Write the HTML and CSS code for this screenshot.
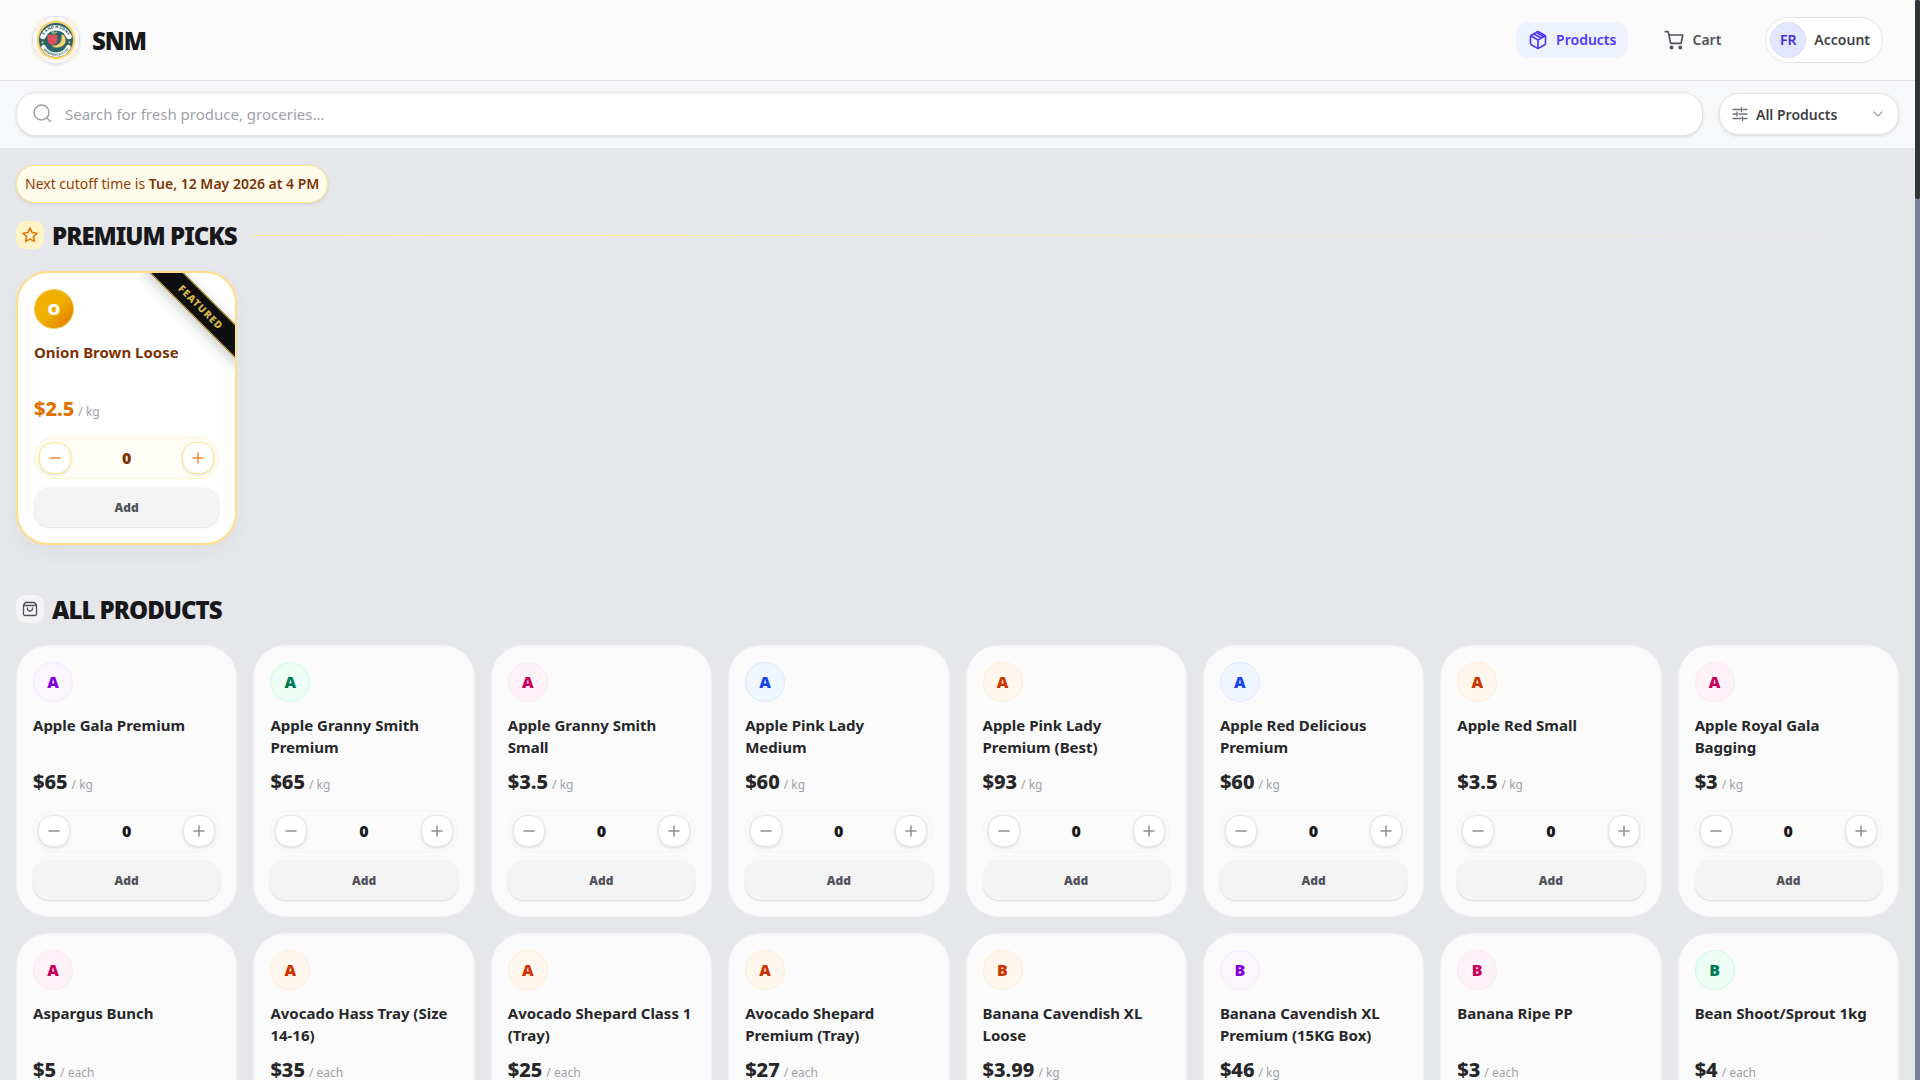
FILE: index.html
```html
<!DOCTYPE html>
<html lang="en">
  <head>
    <meta charset="UTF-8">
    <meta name="viewport" content="width=device-width, initial-scale=1">
    <title>SNM - Products</title>
    <link rel="stylesheet" href="styles.css">
  </head>
  <body>
    <div class="page">
      <header class="header">
        <a class="brand" href="#">
          <span class="logo">
            <svg viewBox="0 0 80 80" width="40" height="40">
              <rect width="80" height="80" rx="10" fill="#fdf1e0"/>
              <circle cx="40" cy="40" r="38" fill="#f2cd62"/>
              <circle cx="40" cy="40" r="34" fill="#2c6468"/>
              <path d="M14 33a28 28 0 0 1 52 0" fill="none" stroke="#fff" stroke-width="11" stroke-linecap="round"/>
              <path d="M15 54a28 28 0 0 0 50 0" fill="none" stroke="#fff" stroke-width="9" stroke-linecap="round"/>
              <path id="logo-top" d="M14 36a27 27 0 0 1 52 0" fill="none"/>
              <path id="logo-bottom" d="M12 54a31 31 0 0 0 56 0" fill="none"/>
              <path d="M23 33c2-5 8-5 10-3 4-3 10-1 10 5 1 9-4 15-10 15s-11-7-10-17z" fill="#dc4f5c"/>
              <path d="M32 27l3-5M34 27l8-3" stroke="#8fb98a" stroke-width="3"/>
              <path d="M54 29c11 11 4 25-10 26-6 1-12-2-13-4 14 1 22-6 20-21z" fill="#f6d36c"/>
              <text class="logo-text"><textPath href="#logo-top" startOffset="50%" text-anchor="middle">S AND N SONS</textPath></text>
              <text class="logo-text small"><textPath href="#logo-bottom" startOffset="50%" text-anchor="middle">NOMINEES PTY LTD</textPath></text>
              <circle cx="13" cy="45" r="2" fill="#f2cd62"/>
              <circle cx="67" cy="45" r="2" fill="#f2cd62"/>
            </svg>
          </span>
          <span class="brand-name">SNM</span>
        </a>
        <nav class="nav">
          <a class="nav-link active" href="#">
            <svg class="icon" viewBox="0 0 24 24" width="20" height="20" stroke-width="2">
              <path d="M21 8a2 2 0 0 0-1-1.730l-7-4a2 2 0 0 0-2 0l-7 4A2 2 0 0 0 3 8v8a2 2 0 0 0 1 1.730l7 4a2 2 0 0 0 2 0l7-4A2 2 0 0 0 21 16z"/>
              <path d="M3.300 7l8.700 5 8.700-5M12 22V12M7 4.700l9 5M10 2.800l9 5.200"/>
            </svg>
            Products
          </a>
          <a class="nav-link" href="#">
            <svg class="icon" viewBox="0 0 24 24" width="20" height="20" stroke-width="2">
              <path d="M1.500 2H5l3 14h12.500L22.500 6H6"/>
              <circle cx="9" cy="21" r="1.300" fill="currentColor"/>
              <circle cx="19.500" cy="21" r="1.300" fill="currentColor"/>
            </svg>
            Cart
          </a>
          <a class="account" href="#">
            <span class="account-initials">FR</span>
            Account
          </a>
        </nav>
      </header>

      <div class="toolbar">
        <div class="search">
          <svg class="icon" viewBox="0 0 20 20" width="20" height="20" stroke-width="1.500">
            <circle cx="8.500" cy="8.500" r="7.500"/>
            <path d="M14 14l3.500 3.500"/>
          </svg>
          <input type="text" aria-label="Search products" placeholder="Search for fresh produce, groceries...">
        </div>
        <div class="filter">
          <svg class="icon filter-icon" viewBox="0 0 16 16" width="16" height="16" stroke-width="1.300">
            <path d="M1 3.500h8M11 3.500h4M9.500 1.500v4M1 8h4M7 8h8M5 6v4M1 12.500h8M11 12.500h4M10.500 10.500v4"/>
          </svg>
          <select aria-label="Product filter">
            <option>All Products</option>
          </select>
          <svg class="icon chevron" viewBox="0 0 16 16" width="16" height="16" stroke-width="1.300">
            <path d="M4 6l4 4 4-4"/>
          </svg>
        </div>
      </div>

      <main class="content">
        <p class="cutoff">Next cutoff time is <strong>Tue, 12 May 2026 at 4 PM</strong></p>

        <section class="section premium">
          <div class="section-head">
            <span class="section-icon">
              <svg class="icon" viewBox="0 0 24 24" width="18" height="18" stroke-width="2">
                <path d="M12 2.800l2.800 6 6.600.8-4.900 4.500 1.300 6.500L12 17.400l-5.800 3.200 1.300-6.500-4.900-4.500 6.600-.8z"/>
              </svg>
            </span>
            <h2>PREMIUM PICKS</h2>
            <span class="section-line"></span>
          </div>
          <div class="grid" id="premium-grid"></div>
        </section>

        <section class="section">
          <div class="section-head">
            <span class="section-icon">
              <svg class="icon" viewBox="0 0 16 16" width="16" height="16" stroke-width="1.300">
                <path d="M3.500 1.500h9l2 2.500v9a1.500 1.500 0 0 1-1.500 1.500H3A1.500 1.500 0 0 1 1.500 13V4zM1.500 4.500h13M5.500 7v.5a2.500 2.500 0 0 0 5 0V7"/>
              </svg>
            </span>
            <h2>ALL PRODUCTS</h2>
            <span class="section-line"></span>
          </div>
          <div class="grid" id="product-grid"></div>
        </section>
      </main>
    </div>
    <div class="rail"><div class="rail-thumb"></div></div>
    <script src="script.js"></script>
  </body>
</html>
```
FILE: styles.css
```css
* {
  box-sizing: border-box;
}
body {
  margin: 0;
  display: flex;
  height: 100vh;
  overflow: hidden;
  background: #e5e7eb;
  color: #18181b;
  font-family: "Noto Sans", "Open Sans", sans-serif;
  font-size: 14px;
  line-height: 20px;
}
a {
  color: inherit;
  text-decoration: none;
}
button, input, select {
  font-family: inherit;
  margin: 0;
}
.icon {
  flex: none;
  fill: none;
  stroke: currentColor;
  stroke-linecap: round;
  stroke-linejoin: round;
}
.page {
  flex: 1;
  min-width: 0;
  overflow: hidden;
}

/* slim scroll rail on the right edge */
.rail {
  width: 5px;
  background: #76809a;
}
.rail-thumb {
  height: 199px;
  border-radius: 3px;
  background: #2b3636;
}

/* header */
.header {
  display: flex;
  align-items: center;
  justify-content: space-between;
  padding: 16px 32px;
  border-bottom: 1px solid #e4e4e7;
  background: #fafafa;
}
.brand {
  display: flex;
  align-items: center;
  gap: 12px;
}
.logo {
  display: flex;
  align-items: center;
  justify-content: center;
  width: 48px;
  height: 48px;
  border: 1px solid #e4e4e7;
  border-radius: 50%;
  background: #fff;
  box-shadow: 0 1px 3px rgba(0, 0, 0, 0.1);
}
.logo-text {
  fill: #2c6468;
  font-size: 8px;
  font-weight: 800;
}
.logo-text.small {
  font-size: 6px;
}
.brand-name {
  padding-top: 2px;
  font-size: 24px;
  line-height: 30px;
  font-weight: 900;
  letter-spacing: -1px;
}
.nav {
  display: flex;
  align-items: center;
  gap: 24px;
  font-weight: 600;
  color: #52525b;
}
.nav-link {
  display: flex;
  align-items: center;
  gap: 8px;
  padding: 8px 12px;
  border-radius: 12px;
}
.nav-link.active {
  background: #eef2ff;
  color: #4f39f6;
}
.account {
  display: flex;
  align-items: center;
  gap: 8px;
  margin-left: 8px;
  padding: 4px 12px 4px 4px;
  border: 1px solid #e4e4e7;
  border-radius: 24px;
  background: #fff;
  color: #3f3f46;
}
.account-initials {
  width: 36px;
  height: 36px;
  border: 1px solid #dcdfee;
  border-radius: 50%;
  background: #e0e7ff;
  color: #432dd7;
  line-height: 34px;
  text-align: center;
}

/* search row */
.toolbar {
  display: flex;
  align-items: center;
  gap: 16px;
  padding: 11px 16px 12px;
  background: #f7f8fa;
}
.search {
  display: flex;
  flex: 1;
  align-items: center;
  gap: 12px;
  height: 44px;
  padding: 0 16px;
  border: 1px solid #e4e4e7;
  border-radius: 20px;
  background: #fff;
  color: #9f9fa9;
  box-shadow: 0 1px 3px rgba(0, 0, 0, 0.12);
}
.search input {
  flex: 1;
  padding: 0;
  border: 0;
  outline: 0;
  background: none;
  font-size: 15px;
}
.search input::placeholder {
  color: #9f9fa9;
}
.filter {
  position: relative;
  width: 180px;
  color: #71717b;
}
.filter select {
  width: 100%;
  height: 42px;
  padding: 0 36px;
  border: 1px solid #e4e4e7;
  border-radius: 20px;
  appearance: none;
  background: #fff;
  color: #3f3f46;
  font-size: 14px;
  font-weight: 600;
  box-shadow: 0 1px 3px rgba(0, 0, 0, 0.12);
}
.filter-icon {
  position: absolute;
  top: 13px;
  left: 13px;
}
.chevron {
  position: absolute;
  top: 13px;
  right: 13px;
  color: #9f9fa9;
}

/* sections */
.content {
  padding: 17px 16px;
}
.cutoff {
  width: fit-content;
  margin: 0 0 16px;
  padding: 8px;
  border: 1px solid #fee685;
  border-radius: 19px;
  background: #fffbeb;
  color: #973c00;
  box-shadow: 0 1px 3px rgba(0, 0, 0, 0.12);
}
.cutoff strong {
  color: #7b3306;
  font-weight: 600;
}
.section {
  margin-bottom: 48px;
}
.section-head {
  display: flex;
  align-items: center;
  gap: 8px;
  margin-bottom: 20px;
}
.section-icon {
  display: flex;
  align-items: center;
  justify-content: center;
  width: 28px;
  height: 28px;
  border-radius: 9px;
  background: #f4f4f5;
  color: #52525b;
}
.premium .section-icon {
  background: #fef3c6;
  color: #e17100;
}
.section h2 {
  margin: 0;
  padding-top: 2px;
  font-size: 24px;
  line-height: 30px;
  font-weight: 900;
  letter-spacing: -1px;
}
.section-line {
  flex: 1;
  height: 1px;
  margin-left: 8px;
  background: linear-gradient(to right, #e1e3e6, transparent 30%);
}
.premium .section-line {
  background: linear-gradient(to right, #fee685, transparent);
}
.grid {
  display: grid;
  grid-template-columns: repeat(8, 1fr);
  gap: 16px;
}

/* product card */
.card {
  position: relative;
  padding: 16px;
  border: 1px solid #f1f1f3;
  border-radius: 32px;
  background: #fafafa;
}
.avatar {
  width: 40px;
  height: 40px;
  border: 1px solid;
  border-radius: 50%;
  font-size: 16px;
  line-height: 38px;
  font-weight: 900;
  text-align: center;
}
.purple { background: #faf5ff; border-color: #f3e8ff; color: #8200db; }
.green { background: #ecfdf5; border-color: #d0fae5; color: #007a55; }
.pink { background: #fdf2f8; border-color: #fce7f3; color: #c6005c; }
.blue { background: #eff6ff; border-color: #dbeafe; color: #1447e6; }
.orange { background: #fff7ed; border-color: #ffedd4; color: #ca3500; }
.gold {
  background: linear-gradient(135deg, #f0b100 50%, #e17100);
  border-color: #f5c84a;
  color: #fff;
}
.card h3 {
  min-height: 44px;
  margin: 12px 0 10px;
  color: #27272a;
  font-size: 15px;
  line-height: 22px;
  font-weight: 700;
  white-space: pre-line;
}
.price {
  display: flex;
  align-items: baseline;
  gap: 4px;
  margin: 0 0 14px;
  color: #9f9fa9;
  font-size: 12px;
  line-height: 16px;
}
.price strong {
  color: #27272a;
  font-size: 20px;
  line-height: 28px;
  font-weight: 800;
}
.stepper {
  display: flex;
  align-items: center;
  justify-content: space-between;
  margin-bottom: 8px;
  padding: 4px;
  border: 1px solid #f4f4f5;
  border-radius: 20px;
  font-size: 16px;
  font-weight: 900;
}
.stepper button {
  display: flex;
  align-items: center;
  justify-content: center;
  width: 32px;
  height: 32px;
  padding: 0;
  border: 1px solid #e4e4e7;
  border-radius: 14px;
  background: #fff;
  color: #8f8f99;
  box-shadow: 0 1px 3px rgba(0, 0, 0, 0.12);
}
.add {
  display: block;
  width: 100%;
  height: 40px;
  padding: 0;
  border: 0;
  border-radius: 16px;
  background: #f4f4f5;
  color: #52525b;
  font-size: 12px;
  font-weight: 900;
  box-shadow: 0 1px 2px rgba(0, 0, 0, 0.14);
}

.premium .card {
  border: 2px solid #ffdf85;
  background: #fff;
  box-shadow: 0 8px 16px rgba(120, 100, 60, 0.05);
}
.premium .card h3,
.premium .stepper {
  color: #7b3306;
}
.premium .price strong {
  color: #e17100;
}
.premium .stepper {
  border-color: #fef3c6;
  background: #fffdf5;
}
.premium .stepper button {
  border-color: #fee685;
  color: #e88c35;
}
.ribbon-box {
  position: absolute;
  top: 0;
  right: 0;
  width: 96px;
  height: 96px;
  overflow: hidden;
  border-radius: 0 30px 0 0;
}
.ribbon {
  position: absolute;
  top: 22px;
  right: -36px;
  width: 140px;
  height: 24px;
  border: 1px solid #d4af37;
  background: #0f0f0f;
  color: #d4b548;
  font-size: 10px;
  line-height: 22px;
  font-weight: 900;
  letter-spacing: 1px;
  text-align: center;
  transform: rotate(45deg);
  box-shadow: 0 4px 14px rgba(0, 0, 0, 0.2);
}
```
FILE: script.js
```js
const premium = [
  ["Onion Brown Loose", "2.5", "kg", "gold"],
];

const products = [
  ["Apple Gala Premium", "65", "kg", "purple"],
  ["Apple Granny Smith Premium", "65", "kg", "green"],
  ["Apple Granny Smith Small", "3.5", "kg", "pink"],
  ["Apple Pink Lady\nMedium", "60", "kg", "blue"],
  ["Apple Pink Lady Premium (Best)", "93", "kg", "orange"],
  ["Apple Red Delicious Premium", "60", "kg", "blue"],
  ["Apple Red Small", "3.5", "kg", "orange"],
  ["Apple Royal Gala Bagging", "3", "kg", "pink"],
  ["Aspargus Bunch", "5", "each", "pink"],
  ["Avocado Hass Tray (Size 14-16)", "35", "each", "orange"],
  ["Avocado Shepard Class 1 (Tray)", "25", "each", "orange"],
  ["Avocado Shepard Premium (Tray)", "27", "each", "orange"],
  ["Banana Cavendish XL Loose", "3.99", "kg", "orange"],
  ["Banana Cavendish XL Premium (15KG Box)", "46", "kg", "purple"],
  ["Banana Ripe PP", "3", "each", "pink"],
  ["Bean Shoot/Sprout 1kg", "4", "each", "green"],
];

const icon = (d) =>
  `<svg class="icon" viewBox="0 0 12 12" width="12" height="12" stroke-width="1.5"><path d="${d}"/></svg>`;

function card([name, price, unit, color], featured) {
  return `
    <article class="card">
      ${featured ? '<div class="ribbon-box"><div class="ribbon">FEATURED</div></div>' : ""}
      <div class="avatar ${color}">${name[0]}</div>
      <h3>${name}</h3>
      <p class="price"><strong>$${price}</strong> / ${unit}</p>
      <div class="stepper">
        <button type="button" aria-label="Remove one ${name}">${icon("M1 6h10")}</button>
        <span>0</span>
        <button type="button" aria-label="Add one ${name}">${icon("M1 6h10M6 1v10")}</button>
      </div>
      <button type="button" class="add">Add</button>
    </article>`;
}

document.getElementById("premium-grid").innerHTML = premium.map((p) => card(p, true)).join("");
document.getElementById("product-grid").innerHTML = products.map((p) => card(p, false)).join("");
```
